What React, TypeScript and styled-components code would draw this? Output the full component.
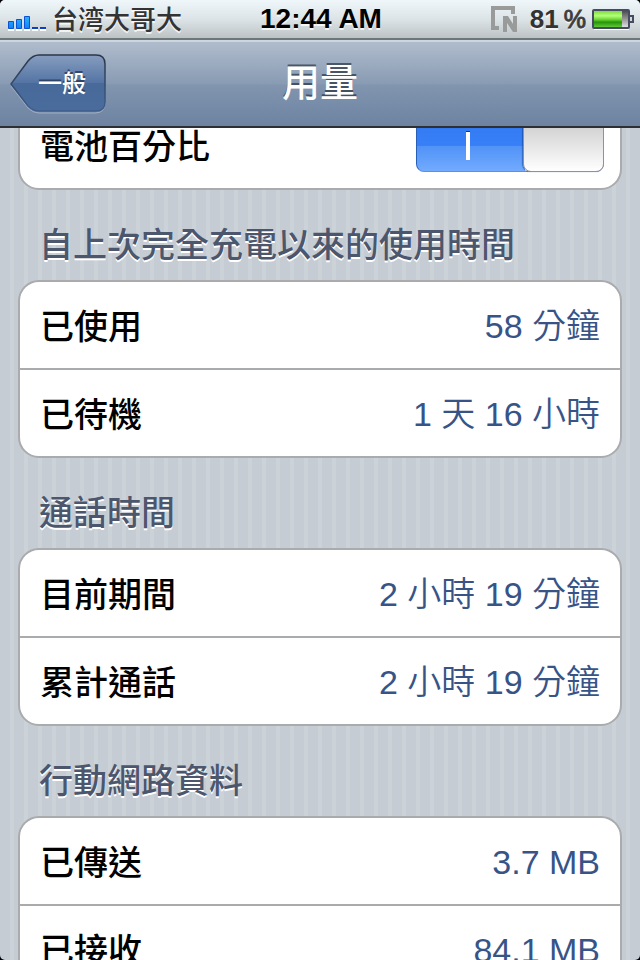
import React from 'react';
import styled, { createGlobalStyle } from 'styled-components';

const GlobalStyle = createGlobalStyle`
  * { box-sizing: border-box; }
  html, body { margin: 0; background: #000; }
  body, button, input { font-family: "Liberation Sans", "Noto Sans CJK TC", sans-serif; }
`;

const Screen = styled.div`
  height: 100vh;
  display: flex;
  flex-direction: column;
  overflow: hidden;
  border-radius: 5px;
  background: #c5ccd4 repeating-linear-gradient(90deg, #c5ccd4 0 10px, #cbd2d8 10px 14px);
`;

const StatusBar = styled.header`
  flex: none;
  display: grid;
  grid-template-columns: 1fr auto 1fr;
  align-items: center;
  height: 40px;
  padding: 0 6px 0 8px;
  border-bottom: 2px solid #6c7778;
  background: linear-gradient(#eff7fa, #dde4e7 50%, #bdc3c5);
  color: #333;
  font-size: 26px;
  line-height: 38px;
  text-shadow: 0 2px 0 rgba(255, 255, 255, 0.75);
`;

const Carrier = styled.div`
  display: flex;
  align-items: center;
  gap: 6px;
  font-weight: 500;

  span { padding-top: 2px; line-height: 36px; }
  svg { margin-top: 9px; }
`;

const Clock = styled.time`
  color: #000;
  font-size: 28px;
  font-weight: bold;
`;

const StatusIcons = styled.div`
  display: flex;
  align-items: center;
  justify-content: flex-end;

  svg { margin-top: 1px; }
`;

const Percent = styled.span`
  display: flex;
  gap: 5px;
  margin: 0 6px 0 12px;
  font-size: 25px;

  strong { font-size: 26px; }
  span { -webkit-text-stroke: 1px #444; }
`;

const NavBar = styled.nav`
  flex: none;
  display: grid;
  grid-template-columns: 1fr auto 1fr;
  align-items: center;
  height: 88px;
  padding: 0 10px;
  border-top: 2px solid #cdd5df;
  border-bottom: 2px solid #2d3033;
  background: linear-gradient(#b0bccd, #889bb3 50%, #8195af 51%, #6d83a1);
`;

const Title = styled.h1`
  margin: 0;
  color: #fff;
  font-size: 38px;
  font-weight: 500;
  line-height: 80px;
  padding-bottom: 2px;
  text-shadow: 0 -2px 0 rgba(40, 50, 65, 0.7);
`;

const BackButton = styled.button`
  position: relative;
  width: 96px;
  height: 60px;
  padding: 0 20px 0 28px;
  border: 0;
  background: none;
  color: #fff;
  font-size: 24px;
  line-height: 58px;
  font-weight: 500;
  white-space: nowrap;
  text-shadow: 0 -2px 0 rgba(30, 45, 75, 0.7);
`;

const BackShape = styled.svg`
  position: absolute;
  inset: 0;
`;

const BackText = styled.span`
  position: relative;
`;

const Content = styled.main`
  flex: 1;
  min-height: 0;
  overflow: hidden;
  padding: 0 18px;
`;

const SectionTitle = styled.h2`
  margin: 0;
  padding: 38px 21px 18px;
  color: #4c566c;
  font-size: 34px;
  font-weight: 500;
  line-height: 34px;
  text-shadow: 0 2px 0 #fff;
`;

const Card = styled.dl<{ $scrolled?: boolean }>`
  margin: ${(p) => (p.$scrolled ? '-28px' : '0')} 0 0;
  border: 2px solid #aaabac;
  border-radius: 21px;
  background: #fff;
`;

const Row = styled.div`
  display: flex;
  align-items: center;
  justify-content: space-between;
  height: 86px;
  padding: 0 20px;
  font-size: 34px;
  line-height: 50px;

  & + & {
    height: 88px;
    border-top: 2px solid #aaabac;
  }
`;

const Label = styled.dt`
  padding-top: 3px;
  color: #000;
  font-weight: 500;
`;

const Value = styled.dd`
  margin: 0;
  padding-top: 1px;
  color: #385487;
  font-weight: 350;
`;

const SwitchCell = styled.dd`
  position: relative;
  margin: 0 -4px 0 0;
  height: 54px;
`;

const Switch = styled.input`
  appearance: none;
  display: block;
  width: 188px;
  height: 54px;
  margin: 0;
  border: 1px solid #8d8d8d;
  border-radius: 8px;
  background: linear-gradient(#bbb, #fff);

  &:checked {
    background:
      linear-gradient(#245fc0, #347cf4 20%, #3880f8 52%, #5092f6 52%, #72abff) 0 0 / 108px 100% no-repeat,
      linear-gradient(#bbb, #d5d5d5 20%, #fff);
    border-color: #5d7fb8 #8d8d8d #5d8fdc #2860b8;
  }
`;

const SwitchMark = styled.span`
  position: absolute;
  top: 14px;
  left: 50px;
  width: 4px;
  height: 28px;
  background: #fff;
  box-shadow: 0 -1px 0 #123a80;
  pointer-events: none;
`;

const SwitchKnob = styled.span`
  position: absolute;
  top: 0;
  right: 0;
  width: 81px;
  height: 54px;
  border: 1px solid #929292;
  border-radius: 8px;
  background: linear-gradient(#bbb, #d5d5d5 20%, #fff);
  box-shadow: -1px 0 1px rgba(15, 60, 140, 0.55);
  pointer-events: none;
`;

const Signal = () => (
  <svg width="38" height="15" viewBox="0 0 38 15" aria-hidden="true">
    <defs>
      <linearGradient id="signal" x1="0" y1="0" x2="0" y2="15" gradientUnits="userSpaceOnUse">
        <stop offset="0" stopColor="#2cb4ff" />
        <stop offset="1" stopColor="#0878f4" />
      </linearGradient>
    </defs>
    <path d="M0 13h6v2H0zM8 13h6v2H8zM16 13h6v2h-6zM24 13h6v2h-6zM32 13h6v2h-6z" fill="#fff" />
    <g fill="url(#signal)" stroke="#0c50d4">
      <path d="M.5 5.500h5v7h-5zM8.500 3.500h5v9h-5zM16.500 .5h5v12h-5z" />
    </g>
    <path d="M24 11h6v2h-6zM32 11h6v2h-6z" fill="#0f3fc4" />
  </svg>
);

const NetworkMark = () => (
  <svg width="27" height="27" viewBox="0 0 27 27" aria-hidden="true">
    <path d="M0 0h24v8h-4V4H4v16h4v4H0z" fill="#999b9b" />
    <path d="M12 10h5l5 8v-8h4v16h-4l-6-9v9h-4z" fill="#999b9b" />
  </svg>
);

const Battery = () => (
  <svg width="42" height="21" viewBox="0 0 42 21" aria-hidden="true">
    <defs>
      <linearGradient id="charge" x2="0" y2="1">
        <stop offset="0" stopColor="#7cdc3c" />
        <stop offset=".3" stopColor="#b4ff78" />
        <stop offset=".52" stopColor="#70d838" />
        <stop offset=".7" stopColor="#269408" />
        <stop offset="1" stopColor="#62c838" />
      </linearGradient>
      <linearGradient id="spent" x2="0" y2="1">
        <stop offset="0" stopColor="#444" />
        <stop offset="1" stopColor="#e8e8e8" />
      </linearGradient>
    </defs>
    <path d="M2 20h35" stroke="#fff" strokeWidth="2" />
    <rect x="1" y="1" width="36" height="18" rx="1" fill="url(#spent)" stroke="#454c62" strokeWidth="2" />
    <rect x="2" y="2" width="28" height="16" fill="url(#charge)" />
    <path d="M38 7h3v6h-3" fill="#d4d8dc" stroke="#454c62" strokeWidth="2" />
  </svg>
);

const BackOutline = () => (
  <BackShape width="96" height="60" viewBox="0 0 96 60" aria-hidden="true">
    <defs>
      <linearGradient id="back" x2="0" y2="1">
        <stop offset="0" stopColor="#869dbf" />
        <stop offset=".5" stopColor="#5474a4" />
        <stop offset=".51" stopColor="#486a9a" />
        <stop offset="1" stopColor="#4a6c9c" />
      </linearGradient>
      <linearGradient id="backEdge" x2="0" y2="1">
        <stop offset="0" stopColor="#2b3648" />
        <stop offset="1" stopColor="#405e8d" />
      </linearGradient>
    </defs>
    <path d="M1 32L18 54Q23 59 29 59H85Q95 59 95 49" fill="none" stroke="#a0afc4" strokeWidth="1" />
    <path
      d="M1 30L18 7Q23 1 29 1H86Q95 1 95 10V48Q95 57 86 57H29Q23 57 18 52Z"
      fill="url(#back)"
      stroke="url(#backEdge)"
      strokeWidth="1.500"
    />
  </BackShape>
);

const sections = [
  { title: '自上次完全充電以來的使用時間', rows: [['已使用', '58 分鐘'], ['已待機', '1 天 16 小時']] },
  { title: '通話時間', rows: [['目前期間', '2 小時 19 分鐘'], ['累計通話', '2 小時 19 分鐘']] },
  { title: '行動網路資料', rows: [['已傳送', '3.7 MB'], ['已接收', '84.1 MB']] },
];

export default function App() {
  return (
    <>
      <GlobalStyle />
      <Screen>
        <StatusBar>
          <Carrier><Signal /><span>台湾大哥大</span></Carrier>
          <Clock>12:44 AM</Clock>
          <StatusIcons>
            <NetworkMark />
            <Percent><strong>81</strong><span>%</span></Percent>
            <Battery />
          </StatusIcons>
        </StatusBar>
        <NavBar>
          <BackButton type="button"><BackOutline /><BackText>一般</BackText></BackButton>
          <Title>用量</Title>
        </NavBar>
        <Content>
          <Card $scrolled>
            <Row>
              <Label><label htmlFor="battery-percent">電池百分比</label></Label>
              <SwitchCell>
                <Switch id="battery-percent" type="checkbox" role="switch" defaultChecked />
                <SwitchMark />
                <SwitchKnob />
              </SwitchCell>
            </Row>
          </Card>
          {sections.map((section) => (
            <section key={section.title}>
              <SectionTitle>{section.title}</SectionTitle>
              <Card>
                {section.rows.map(([label, value]) => (
                  <Row key={label}>
                    <Label>{label}</Label>
                    <Value>{value}</Value>
                  </Row>
                ))}
              </Card>
            </section>
          ))}
        </Content>
      </Screen>
    </>
  );
}
